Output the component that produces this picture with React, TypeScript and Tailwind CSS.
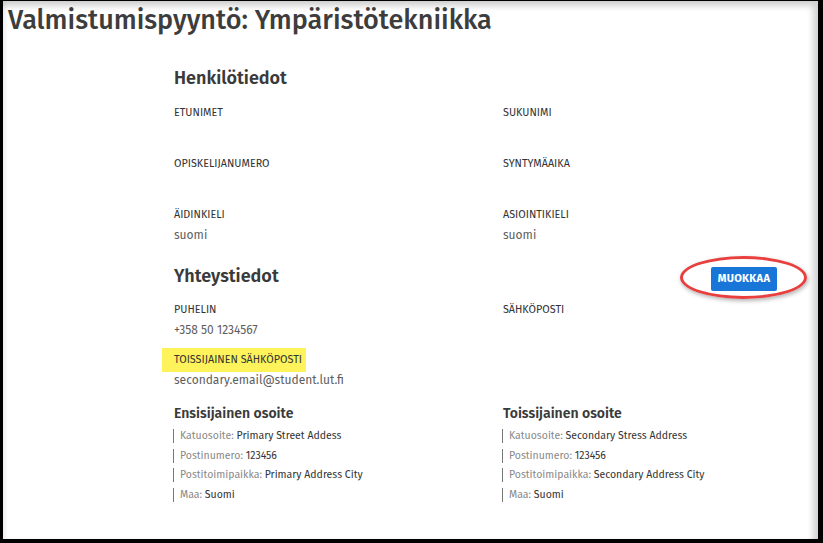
import React from 'react';

const font = { fontFamily: '"Fira Sans", "Open Sans", "Noto Sans", sans-serif' };

function Field({ label, value, mark }: { label: string; value?: string; mark?: boolean }) {
  return (
    <div className="flex flex-col">
      <div className="flex h-[20px] items-center text-[10.8px] uppercase text-[#333]">
        {mark ? (
          <span className="-ml-[12px] flex h-[24px] items-center bg-[#fef35a] pl-[12px] pr-[4px]">{label}</span>
        ) : (
          label
        )}
      </div>
      <div className="h-[20px] text-[12px] leading-[20px] text-[#5e5e5e]">{value}</div>
    </div>
  );
}

function Address({ title, rows }: { title: string; rows: [string, string][] }) {
  return (
    <div>
      <h3 className="h-[22px] text-[14px] font-semibold leading-[22px] text-[#3a3a3a]">{title}</h3>
      <div className="mt-[4px] flex flex-col gap-[5.7px]">
        {rows.map(([k, v]) => (
          <div key={k} className="-ml-[1px] h-[14px] border-l border-[#777] pl-[6px] text-[10.5px] leading-[14px]">
            <span className="text-[#888]">{k}: </span>
            <span className="text-[#333]">{v}</span>
          </div>
        ))}
      </div>
    </div>
  );
}

export default function App() {
  return (
    <div className="h-[543px] w-[823px] bg-black pb-[4px] pl-[3px] pr-[5px] pt-[1px]" style={font}>
      <div className="h-full w-full bg-white shadow-[inset_-5px_5px_6px_rgba(0,0,0,0.18),inset_3px_0_3px_rgba(0,0,0,0.06)]">
        <h1 className="pl-[5px] pt-[3px] text-[27px] font-medium leading-[32px] text-[#3d3d3d]">
          Valmistumispyyntö: Ympäristötekniikka
        </h1>

        <div className="ml-[171px] mt-[28px] w-[603px]">
          <h2 className="h-[28px] text-[18px] font-semibold leading-[28px] text-[#3a3a3a]">Henkilötiedot</h2>
          <div className="mt-[11px] grid grid-cols-[329px_1fr] gap-y-[11px]">
            <Field label="Etunimet" />
            <Field label="Sukunimi" />
            <Field label="Opiskelijanumero" />
            <Field label="Syntymäaika" />
            <Field label="Äidinkieli" value="suomi" />
            <Field label="Asiointikieli" value="suomi" />
          </div>

          <div className="mt-[17px] flex h-[28px] items-start justify-between">
            <h2 className="h-[28px] text-[18px] font-semibold leading-[28px] text-[#3a3a3a]">Yhteystiedot</h2>
            <div className="relative mt-[5px] h-[24px]">
              <div className="pointer-events-none absolute -left-[31px] -top-[11px] h-[43px] w-[127px] rounded-[50%] border-[3px] border-[#e8403f] shadow-[1px_2px_4px_rgba(0,0,0,0.3)]" />
              <button className="block h-[24px] w-[66px] rounded-[2px] bg-[#1976d9] text-[11px] font-bold tracking-[0.3px] text-white">
                MUOKKAA
              </button>
            </div>
          </div>
          <div className="mt-[10px] grid grid-cols-[329px_1fr] gap-y-[10px]">
            <Field label="Puhelin" value="+358 50 1234567" />
            <Field label="Sähköposti" />
            <Field label="Toissijainen sähköposti" value="secondary.email@student.lut.fi" mark />
            <div />
          </div>

          <div className="mt-[13px] grid grid-cols-[329px_1fr]">
            <Address
              title="Ensisijainen osoite"
              rows={[
                ['Katuosoite', 'Primary Street Addess'],
                ['Postinumero', '123456'],
                ['Postitoimipaikka', 'Primary Address City'],
                ['Maa', 'Suomi'],
              ]}
            />
            <Address
              title="Toissijainen osoite"
              rows={[
                ['Katuosoite', 'Secondary Stress Address'],
                ['Postinumero', '123456'],
                ['Postitoimipaikka', 'Secondary Address City'],
                ['Maa', 'Suomi'],
              ]}
            />
          </div>
        </div>
      </div>
    </div>
  );
}
